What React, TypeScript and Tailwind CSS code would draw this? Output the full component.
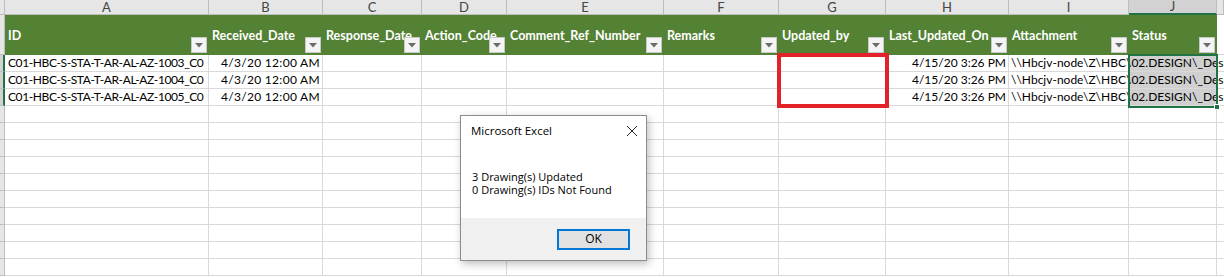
import React from "react"

const letters = ["A", "B", "C", "D", "E", "F", "G", "H", "I", "J", ""]
const headers = ["ID", "Received_Date", "Response_Date", "Action_Code", "Comment_Ref_Number", "Remarks", "Updated_by", "Last_Updated_On", "Attachment", "Status", ""]
const ids = ["C01-HBC-S-STA-T-AR-AL-AZ-1003_C0", "C01-HBC-S-STA-T-AR-AL-AZ-1004_C0", "C01-HBC-S-STA-T-AR-AL-AZ-1005_C0"]
const path = "\\\\Hbcjv-node\\Z\\HBC\\02.DESIGN\\_Design Documents"

function FilterButton() {
  return (
    <div className="absolute right-[2px] bottom-[2px] z-20 w-[16px] h-[16px] bg-[#f4f4f4] border border-[#c8c8c8] flex items-center justify-center">
      <svg width="8" height="5" viewBox="0 0 8 5">
        <path d="M0 0 H8 L4 4.5 Z" fill="#6b6b6b" />
      </svg>
    </div>
  )
}

export default function App() {
  const blankRows = Array.from({ length: 10 })

  return (
    <div className="relative w-[1224px] h-[277px] overflow-hidden bg-white font-['Lato',sans-serif] text-[12px] text-black">
      <div className="grid grid-cols-[5px_204px_114px_99px_85px_157px_115px_107px_123px_120px_88px_1fr] grid-rows-[15px_40px_repeat(13,17px)]">
        {/* column letters */}
        <div className="bg-[#e6e6e6] border-r border-b border-[#bdbdbd]" />
        {letters.map((l, i) => (
          <div
            key={"l" + i}
            className={
              i === 9
                ? "bg-[#d2d2d2] border-r border-[#bdbdbd] border-b-2 border-b-[#217346] flex items-center justify-center text-[13px] leading-none text-[#444]"
                : "bg-[#e6e6e6] border-r border-b border-[#bdbdbd] flex items-center justify-center text-[13px] leading-none text-[#444]"
            }
          >
            {l}
          </div>
        ))}

        {/* green header row */}
        <div className="bg-[#e6e6e6] border-r border-b border-[#bdbdbd]" />
        {headers.map((h, i) =>
          i === 10 ? (
            <div key={"h" + i} className="bg-white border-b border-[#d9d9d9]" />
          ) : (
            <div
              key={"h" + i}
              className="relative bg-[#548235] text-white font-bold text-[12.5px] pl-[3px] pt-[12px] whitespace-nowrap overflow-hidden"
            >
              {h}
              <FilterButton />
            </div>
          )
        )}

        {/* data rows */}
        {ids.map((id, r) => (
          <React.Fragment key={"r" + r}>
            <div className="bg-[#d2d2d2] border-r-2 border-r-[#217346] border-b border-b-[#bdbdbd]" />
            <div className="border-r border-b border-[#d9d9d9] pl-[3px] leading-[16px] tracking-[-0.4px] whitespace-nowrap overflow-hidden">{id}</div>
            <div className="border-r border-b border-[#d9d9d9] pr-[2px] text-right leading-[16px] tracking-[0.3px] whitespace-nowrap">4/3/20 12:00 AM</div>
            <div className="border-r border-b border-[#d9d9d9]" />
            <div className="border-r border-b border-[#d9d9d9]" />
            <div className="border-r border-b border-[#d9d9d9]" />
            <div className="border-r border-b border-[#d9d9d9]" />
            <div className="border-r border-b border-[#d9d9d9]" />
            <div className="border-r border-b border-[#d9d9d9] pr-[2px] text-right leading-[16px] whitespace-nowrap">4/15/20 3:26 PM</div>
            <div className="relative z-10 border-r border-b border-[#d9d9d9] pl-[2px] leading-[16px] whitespace-nowrap overflow-visible">{path}</div>
            <div className="bg-[#d0d0d0] border-r border-b border-[#d9d9d9]" />
            <div className="border-b border-[#d9d9d9]" />
          </React.Fragment>
        ))}

        {blankRows.map((_, r) => (
          <React.Fragment key={"b" + r}>
            <div className="bg-[#e6e6e6] border-r border-b border-[#bdbdbd]" />
            {letters.map((_, c) => (
              <div key={c} className={c === 10 ? "border-b border-[#d9d9d9]" : "border-r border-b border-[#d9d9d9]"} />
            ))}
          </React.Fragment>
        ))}
      </div>

      {/* selection around J2:J4 */}
      <div className="absolute left-[1128px] top-[54px] w-[90px] h-[54px] border-2 border-[#217346] z-20">
        <div className="absolute -right-[4px] -bottom-[4px] w-[6px] h-[6px] bg-[#217346] border border-white" />
      </div>

      {/* red highlight box */}
      <div className="absolute left-[777px] top-[53px] w-[112px] h-[55px] border-4 border-[#e32129] z-20" />

      {/* message box */}
      <div className="absolute left-[460px] top-[115px] w-[187px] h-[146px] z-30 bg-white border border-[#8c8c8c] shadow-[2px_3px_8px_rgba(0,0,0,0.25)] flex flex-col font-['Open_Sans',sans-serif] text-[11px] text-black">
        <div className="h-[30px] flex items-center justify-between pl-[10px] pr-[8px]">
          <span className="text-[11.5px]">Microsoft Excel</span>
          <svg width="12" height="12" viewBox="0 0 12 12">
            <path d="M1 1 L11 11 M11 1 L1 11" stroke="#222" strokeWidth="1" />
          </svg>
        </div>
        <div className="flex-1 pl-[11px] pt-[24px] leading-[13px]">
          <div>3 Drawing(s) Updated</div>
          <div>0 Drawing(s) IDs Not Found</div>
        </div>
        <div className="h-[42px] bg-[#f0f0f0] flex items-center justify-end pr-[16px]">
          <div className="w-[73px] h-[21px] bg-[#e1e1e1] border-2 border-[#0078d7] flex items-center justify-center text-[12px]">OK</div>
        </div>
      </div>
    </div>
  )
}
